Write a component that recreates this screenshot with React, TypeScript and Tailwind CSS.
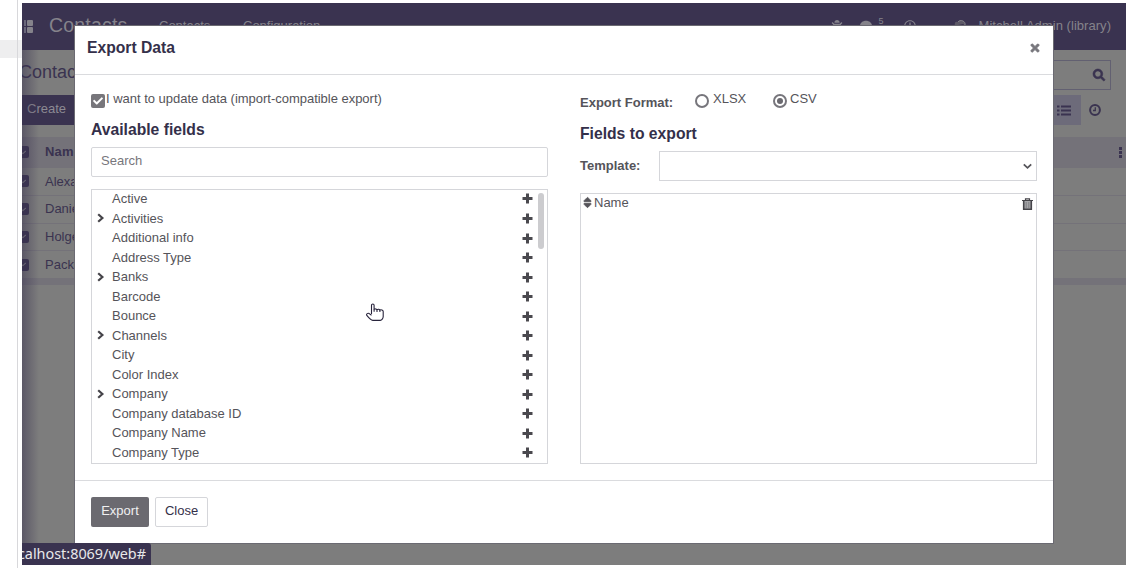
import React from "react";
import {
  FaSearch,
  FaRegClock,
  FaBug,
  FaComment,
  FaTimes,
  FaSort,
  FaCheck,
} from "react-icons/fa";

const fields: { label: string; expandable?: boolean }[] = [
  { label: "Active" },
  { label: "Activities", expandable: true },
  { label: "Additional info" },
  { label: "Address Type" },
  { label: "Banks", expandable: true },
  { label: "Barcode" },
  { label: "Bounce" },
  { label: "Channels", expandable: true },
  { label: "City" },
  { label: "Color Index" },
  { label: "Company", expandable: true },
  { label: "Company database ID" },
  { label: "Company Name" },
  { label: "Company Type" },
];

const contacts = ["Alexa", "Danie", "Holge", "Packt"];

function Chevron() {
  return (
    <svg width="8" height="10" viewBox="0 0 8 10" fill="none" stroke="#454449" strokeWidth="2.2">
      <path d="M1.2 1.2 5.4 5 1.2 8.8" />
    </svg>
  );
}

function Plus() {
  return (
    <svg className="ml-auto mr-[5px] mt-px" width="11" height="11" viewBox="0 0 11 11" fill="#4a494e">
      <path d="M4 .5h3V4h3.500v3H7v3.500H4V7H.5V4H4z" />
    </svg>
  );
}

function Trash() {
  return (
    <svg width="11" height="12" viewBox="0 0 11 12" fill="none">
      <path d="M3.5 2V.8h4V2M0 2.5h11" stroke="#454449" strokeWidth="1.2" />
      <path d="M1.700 3v8.200h7.600V3" fill="#a5a5a8" stroke="#454449" strokeWidth="1.6" />
      <path d="M4.2 4v6M6.8 4v6" stroke="#77777b" strokeWidth=".8" />
    </svg>
  );
}

function Clock() {
  return (
    <svg className="ml-[8px] mr-[10px]" width="12" height="12" viewBox="0 0 12 12" fill="none" stroke="#3a3350">
      <circle cx="6" cy="6" r="4.900" strokeWidth="2" />
      <path d="M6.300 3.200v3.300H4" strokeWidth="1.300" />
    </svg>
  );
}

function ListIcon() {
  return (
    <svg width="14" height="11" viewBox="0 0 14 11" fill="#3a3350">
      <path d="M0 .5h2.500v2H0zM4 .5h10v2H4zM0 4.500h2.500v2H0zM4 4.500h10v2H4zM0 8.500h2.500v2H0zM4 8.500h10v2H4z" />
    </svg>
  );
}

function HandPointer() {
  return (
    <svg width="19" height="19" viewBox="0 0 19 19" fill="#fff" stroke="#28243c" strokeWidth="1.1" strokeLinejoin="round">
      <path d="M5.500 11V2.300C5.500.6 8.100.6 8.100 2.300V6.300C9 5.700 10.500 5.800 11 6.600c.9-.6 2.300-.4 2.700.4 1.400-.5 3.500 0 3.500 1.600v5c0 1.800-1.500 3.800-2.900 3.800H6.800C5 17.200 2.500 14.500.8 12.400 0 10.800 1.800 9.800 3.200 10.600L5.500 12.300" />
      <path d="M8.100 6.300v2.500M11 6.600v2.300M13.900 7v2.100" fill="none" />
    </svg>
  );
}

function RowCheck() {
  return (
    <span className="-ml-1 flex h-3 w-[11px] shrink-0 items-center justify-center rounded-[2px] bg-[#3a3350]">
      <FaCheck className="h-[5px] w-[5px] text-[#8a8a8a]" />
    </span>
  );
}

function Backdrop() {
  return (
    <div className="relative flex h-[562px] flex-col overflow-hidden bg-[#7d7d7d] text-[#3a3350]">
      <nav className="flex h-[47px] shrink-0 items-center bg-[#3a3350] text-[#85838b]">
        <span className="ml-[2px] flex w-[9px] flex-wrap gap-px">
          {[0, 1, 2, 3].map((i) => (
            <i key={i} className={i % 2 ? "h-[6px] w-[6px] rounded-[1px] bg-[#85838b]" : "h-[6px] w-[2px] bg-[#69667a]"} />
          ))}
        </span>
        <span className="-mt-px ml-4 w-[110px] text-[19.500px] tracking-[.2px]">Contacts</span>
        <span className="-mt-px w-[84px]">Contacts</span>
        <span className="-mt-px">Configuration</span>
        <span className="-mt-px ml-auto flex items-center pr-[15px]">
          <FaBug className="mr-[17px] h-3 w-3" />
          <FaComment className="h-3 w-3" />
          <span className="-mt-2 ml-[7px] mr-5 text-[9px]">5</span>
          <FaRegClock className="mr-[38px] h-3 w-3" />
          <svg className="mr-3" width="13" height="14" viewBox="0 0 13 14">
            <path d="M1 7C0 3 2 2 4 3c2-3 8-1 7 3l-2-1-5 1z" fill="#5c5866" />
            <path d="M4 3c2-3 8-1 7 3" fill="none" stroke="#85838b" />
          </svg>
          <span className="tracking-[.04px]">Mitchell Admin (library)</span>
        </span>
      </nav>
      <div className="flex h-[87px] shrink-0 justify-between">
        <div className="flex flex-col">
          <span className="-ml-[3px] mt-[10px] h-[35px] text-[18px] leading-[25px]">Contacts</span>
          <span className="flex h-[30px] w-[60px] items-center bg-[#3a3350] pb-[3px] pl-[5px] text-[#8c8a93]">Create</span>
        </div>
        <div className="flex flex-col pr-[15px]">
          <div className="mt-[10px] flex h-[30px] w-[300px] items-center justify-end border border-[#626071] pr-[5px]">
            <FaSearch className="h-3 w-3 overflow-visible stroke-[#3a3350]" strokeWidth={25} />
          </div>
          <div className="mt-[5px] flex h-[30px] items-center justify-end">
            <span className="flex h-[30px] w-[34px] items-center justify-center bg-[#6d6b7a]">
              <ListIcon />
            </span>
            <Clock />
          </div>
        </div>
      </div>
      <div className="flex h-[31px] shrink-0 items-center bg-[#747279] pb-px font-bold">
        <RowCheck />
        <span className="ml-4 tracking-[.2px]">Name</span>
        <span className="ml-auto mr-1 flex flex-col gap-px">
          <i className="h-[3px] w-[3px] bg-[#3a3350]" />
          <i className="h-[3px] w-[3px] bg-[#3a3350]" />
          <i className="h-[3px] w-[3px] bg-[#3a3350]" />
        </span>
      </div>
      {contacts.map((name) => (
        <div key={name} className="flex h-[27.800px] shrink-0 items-center border-b border-[#747279]">
          <RowCheck />
          <span className="ml-4">{name}</span>
        </div>
      ))}
      <div className="h-[6px] shrink-0 bg-[#747279]" />
      <div className="absolute bottom-0 left-0 top-[47px] w-[17px] bg-gradient-to-r from-[#3a3350]/50 to-transparent" />
    </div>
  );
}

function ExportDialog() {
  return (
    <div className="absolute left-[75px] top-[26px] flex h-[517px] w-[978px] flex-col bg-white shadow-[0_0_0_1px_#6b6a72]">
      <header className="flex h-[49px] shrink-0 items-center justify-between border-b border-[#dadbde] pl-3 pr-[13px]">
        <h4 className="-mt-[5px] text-[15.700px] font-bold text-[#34304a]">Export Data</h4>
        <FaTimes className="-mt-1 h-[12px] w-[10px] stroke-[#77767c] text-[#77767c]" strokeWidth={35} />
      </header>
      <main className="flex h-[405px] shrink-0 justify-between px-4">
        <section className="flex w-[457px] flex-col">
          <label className="mt-[14px] flex h-5 items-center">
            <span className="mt-[3px] flex h-[14px] w-[14px] items-center justify-center rounded-[2px] bg-[#77767b]">
              <FaCheck className="h-[10px] w-[10px] text-white" />
            </span>
            <span className="ml-px tracking-[-0.02px]">I want to update data (import-compatible export)</span>
          </label>
          <h4 className="mt-[10px] h-6 text-[15.700px] font-bold leading-[22px] text-[#34304a]">Available fields</h4>
          <div className="mt-1 flex h-[30px] items-center rounded-[2px] border border-[#d5d6da] px-[9px] pb-[3px] text-[#77767c]">
            Search
          </div>
          <div className="mt-3 flex h-[275px] justify-between overflow-hidden border border-[#d5d6da]">
            <ul className="-mt-[1.300px] grow">
              {fields.map((f) => (
                <li key={f.label} className="flex h-[19.540px] items-center">
                  <span className="w-5 pl-[5px]">{f.expandable && <Chevron />}</span>
                  <span className="leading-[19px]">{f.label}</span>
                  <Plus />
                </li>
              ))}
            </ul>
            <div className="mr-[3px] mt-[3px] h-[56px] w-[6px] rounded-[3px] bg-[#cccccf]" />
          </div>
        </section>
        <section className="flex w-[457px] flex-col">
          <div className="mt-[14px] flex h-7 items-center">
            <b className="w-[115px]">Export Format:</b>
            <span className="-mt-[5px] flex h-[14px] w-[14px] items-center justify-center rounded-full border-2 border-[#77767c]" />
            <span className="-mt-[8px] ml-1 w-[60px]">XLSX</span>
            <span className="-mt-[5px] flex h-[14px] w-[14px] items-center justify-center rounded-full border-2 border-[#77767c]">
              <i className="h-[6px] w-[6px] rounded-full bg-[#6a696f]" />
            </span>
            <span className="-mt-[8px] ml-[3px]">CSV</span>
          </div>
          <h4 className="mt-[6px] h-6 text-[15.700px] font-bold leading-[22px] text-[#34304a]">Fields to export</h4>
          <div className="mt-1 flex h-[30px] items-center justify-between">
            <b>Template:</b>
            <div className="flex h-[30px] w-[378px] items-center justify-end border border-[#d5d6da] pr-1">
              <svg width="9" height="7" viewBox="0 0 9 7" fill="none" stroke="#55545a" strokeWidth="1.800">
                <path d="M.8 1.300 4.500 4.800 8.200 1.300" />
              </svg>
            </div>
          </div>
          <div className="mt-3 flex h-[271px] items-start border border-[#d5d6da] pl-px pr-[3px]">
            <FaSort className="mt-[2px] h-[13px] w-[11px] stroke-[#55545a]" strokeWidth={30} />
            <span className="-mt-px ml-px leading-[20px]">Name</span>
            <span className="ml-auto mt-1">
              <Trash />
            </span>
          </div>
        </section>
      </main>
      <footer className="flex grow gap-[6px] border-t border-[#dadbde] px-4 pt-4">
        <button className="h-[30px] w-[58px] rounded-[2px] bg-[#6b6a70] pb-[3px] text-[#f0f0f0]">Export</button>
        <button className="h-[30px] w-[53px] rounded-[2px] border border-[#d5d6da] bg-white pb-[3px] text-[#34304a]">Close</button>
      </footer>
    </div>
  );
}

export default function App() {
  return (
    <div className="relative flex h-[568px] w-[1126px] overflow-hidden bg-white pt-[3px] font-['Liberation_Sans',Arial,sans-serif] text-[13px] text-[#55545a]">
      <aside className="relative w-[22px] shrink-0">
        <div className="mt-[37px] h-[18px] bg-[#eeeeef]" />
        <div className="absolute -top-[3px] left-[17px] h-[568px] w-px bg-[#d8d8db]" />
      </aside>
      <div className="min-w-0 grow">
        <Backdrop />
      </div>
      <ExportDialog />
      <div className="absolute left-[22px] top-[543px] flex h-[22px] w-[129px] items-center justify-end overflow-hidden rounded-tr-[3px] bg-[#3a3350] pr-[5px] font-['Noto_Sans','Open_Sans',sans-serif] text-[14.400px] text-[#e8e8ea]">
        calhost:8069/web#
      </div>
      <div className="absolute left-[366px] top-[303px]">
        <HandPointer />
      </div>
    </div>
  );
}
